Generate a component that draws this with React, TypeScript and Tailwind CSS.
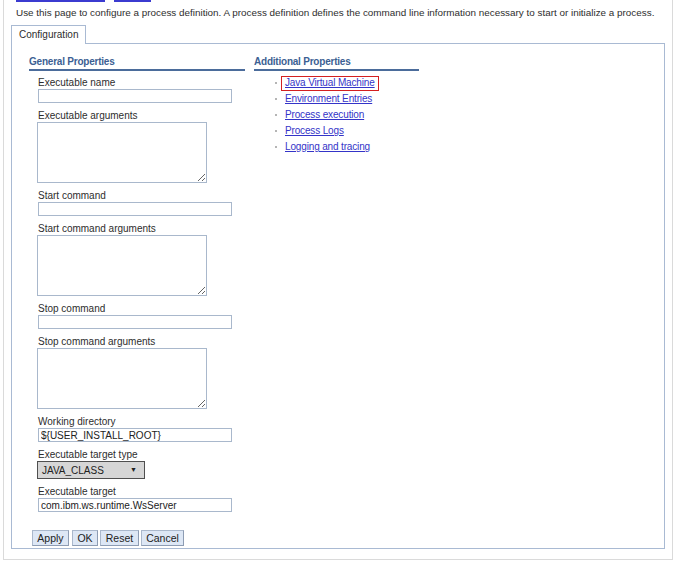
import React from 'react';

const links = [
  'Java Virtual Machine',
  'Environment Entries',
  'Process execution',
  'Process Logs',
  'Logging and tracing',
];

function Label({ children }: { children: React.ReactNode }) {
  return <div className="leading-[13px] text-[#2d2d2d]">{children}</div>;
}

function TextInput({ value = '' }: { value?: string }) {
  return (
    <input
      readOnly
      defaultValue={value}
      className="block h-[14px] w-[194px] border border-[#a9b8cc] bg-white px-[2px] text-[10px] leading-[12px] text-[#222] outline-none"
    />
  );
}

function TextArea() {
  return (
    <textarea
      readOnly
      className="-ml-px block h-[61px] w-[170px] border border-[#a9b8cc] bg-white outline-none"
    />
  );
}

function Heading({ children }: { children: React.ReactNode }) {
  return (
    <div className="border-b-2 border-[#4b6c9b] pb-[1px] text-[10px] font-bold leading-[12px] tracking-[-0.22px] text-[#3c5f93]">
      {children}
    </div>
  );
}

export default function App() {
  return (
    <div className="h-[578px] w-[676px] bg-white font-['Liberation_Sans',Arial,sans-serif] text-[10px]">
      <div className="ml-[3px] h-[560px] w-[670px] border-x border-b border-[#dadada] pl-[7px]">
        {/* breadcrumb, cut off at the top */}
        <div className="flex h-[2px] pl-[5px]">
          <div className="w-[89px] bg-[#3b3bd0]" />
          <div className="ml-[9px] w-[37px] bg-[#3b3bd0]" />
        </div>

        <p className="mt-[5px] pl-[5px] text-[9.9px] leading-[12px] text-[#2d2d2d]">
          Use this page to configure a process definition. A process definition defines the command line information necessary to start or initialize a process.
        </p>

        <div className="relative z-10 -mb-px mt-[6px] inline-block h-[19px] border border-b-0 border-[#a9bad3] bg-white px-[7px] leading-[17px] text-[#2d2d2d]">
          Configuration
        </div>

        <div className="h-[506px] w-[654px] border border-[#a9bad3] pl-[17px] pt-[12px]">
          <div className="flex gap-[9px]">
            <div className="w-[216px]">
              <Heading>General Properties</Heading>
              <div className="mt-[5px] flex flex-col gap-[6px] pl-[9px]">
                <div>
                  <Label>Executable name</Label>
                  <TextInput />
                </div>
                <div>
                  <Label>Executable arguments</Label>
                  <TextArea />
                </div>
                <div>
                  <Label>Start command</Label>
                  <TextInput />
                </div>
                <div>
                  <Label>Start command arguments</Label>
                  <TextArea />
                </div>
                <div>
                  <Label>Stop command</Label>
                  <TextInput />
                </div>
                <div>
                  <Label>Stop command arguments</Label>
                  <TextArea />
                </div>
                <div>
                  <Label>Working directory</Label>
                  <TextInput value="${USER_INSTALL_ROOT}" />
                </div>
                <div>
                  <Label>Executable target type</Label>
                  <div className="-ml-px flex h-[18px] w-[108px] items-center justify-between border border-[#4f4f4f] bg-[#d6d6d6] pl-[4px] pr-[7px] text-[#222]">
                    <span>JAVA_CLASS</span>
                    <span className="text-[7px]">▼</span>
                  </div>
                </div>
                <div>
                  <Label>Executable target</Label>
                  <TextInput value="com.ibm.ws.runtime.WsServer" />
                </div>
              </div>

              <div className="mt-[18px] flex gap-[2px] pl-[3px]">
                {[
                  ['Apply', 'w-[37px]'],
                  ['OK', 'w-[26px] ml-[1px]'],
                  ['Reset', 'w-[39px]'],
                  ['Cancel', 'w-[43px]'],
                ].map(([t, w]) => (
                  <button
                    key={t}
                    className={`${w} h-[16px] border border-[#aab8cc] border-b-[#8d9cb3] border-r-[#8d9cb3] bg-[#dde7f5] text-[10.5px] leading-[13px] text-[#222]`}
                  >
                    {t}
                  </button>
                ))}
              </div>
            </div>

            <div className="w-[165px]">
              <Heading>Additional Properties</Heading>
              <ul className="mt-[4px]">
                {links.map((l, i) => (
                  <li key={l} className="flex h-[16px] items-center pl-[21px]">
                    <span className="h-[2px] w-[2px] bg-[#b5b5b5]" />
                    <span
                      className={`ml-[4px] flex h-[15px] items-center border px-[3px] ${
                        i === 0 ? 'border-[#d42020]' : 'border-transparent'
                      }`}
                    >
                      <a className="text-[10px] leading-[12px] tracking-[-0.15px] text-[#3434c8] underline">{l}</a>
                    </span>
                  </li>
                ))}
              </ul>
            </div>
          </div>
        </div>
      </div>
    </div>
  );
}
